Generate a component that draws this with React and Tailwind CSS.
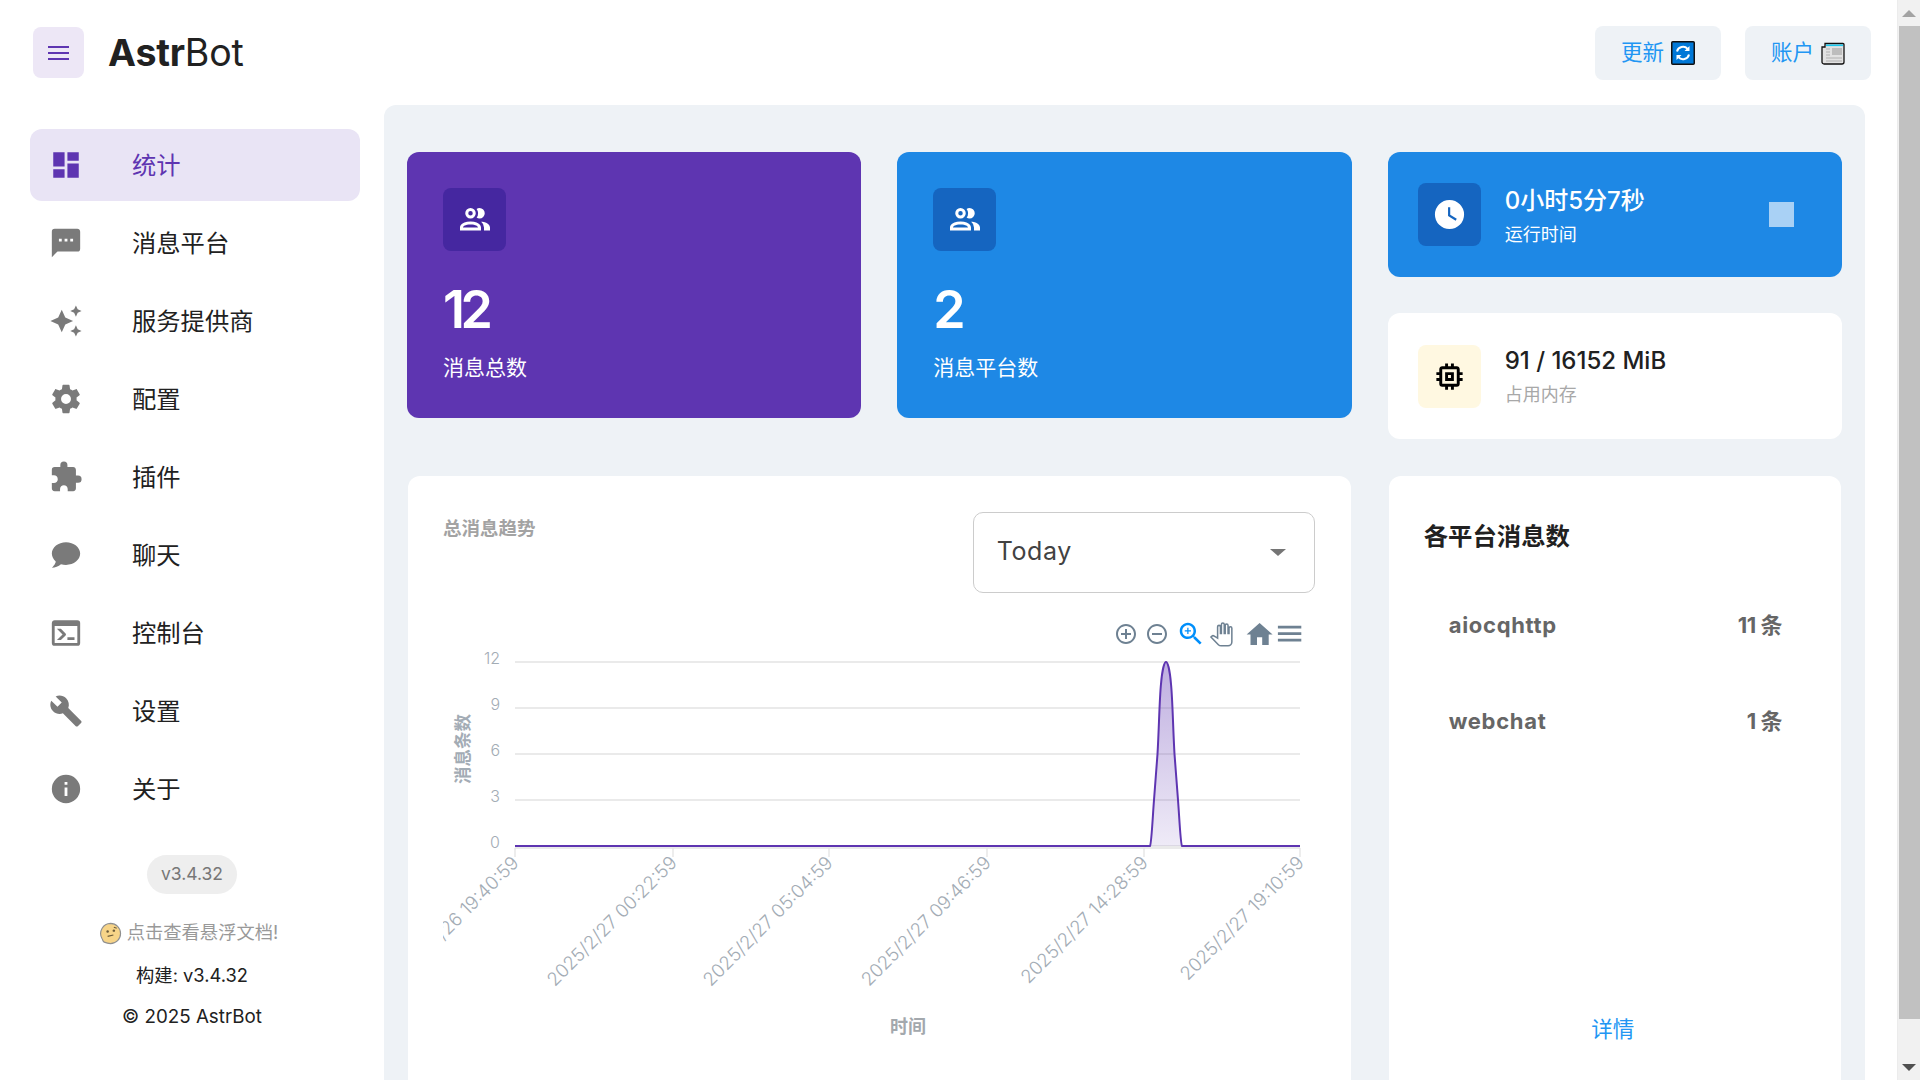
const mdi = {
  dashboard: "M13,3V9H21V3M13,21H21V11H13M3,21H11V15H3M3,13H11V3H3V13Z",
  message: "M20,2H4A2,2 0 0,0 2,4V22L6,18H20A2,2 0 0,0 22,16V4C22,2.89 21.1,2 20,2M17,11H15V9H17M13,11H11V9H13M9,11H7V9H9",
  creation: "M19,1L17.74,3.75L15,5L17.74,6.26L19,9L20.25,6.26L23,5L20.25,3.75M9,4L6.5,9.5L1,12L6.5,14.5L9,20L11.5,14.5L17,12L11.5,9.5M19,15L17.74,17.74L15,19L17.74,20.25L19,23L20.25,20.25L23,19L20.25,17.74",
  cog: "M12,15.5A3.5,3.5 0 0,1 8.5,12A3.5,3.5 0 0,1 12,8.5A3.5,3.5 0 0,1 15.5,12A3.5,3.5 0 0,1 12,15.5M19.43,12.97C19.47,12.65 19.5,12.33 19.5,12C19.5,11.67 19.47,11.34 19.43,11L21.54,9.37C21.73,9.22 21.78,8.95 21.66,8.73L19.66,5.27C19.54,5.05 19.27,4.96 19.05,5.05L16.56,6.05C16.04,5.66 15.5,5.32 14.87,5.07L14.5,2.42C14.46,2.18 14.25,2 14,2H10C9.75,2 9.54,2.18 9.5,2.42L9.13,5.07C8.5,5.32 7.96,5.66 7.44,6.05L4.95,5.05C4.73,4.96 4.46,5.05 4.34,5.27L2.34,8.73C2.21,8.95 2.27,9.22 2.46,9.37L4.57,11C4.53,11.34 4.5,11.67 4.5,12C4.5,12.33 4.53,12.65 4.57,12.97L2.46,14.63C2.27,14.78 2.21,15.05 2.34,15.27L4.34,18.73C4.46,18.95 4.73,19.03 4.95,18.95L7.44,17.94C7.96,18.34 8.5,18.68 9.13,18.93L9.5,21.58C9.54,21.82 9.75,22 10,22H14C14.25,22 14.46,21.82 14.5,21.58L14.87,18.93C15.5,18.67 16.04,18.34 16.56,17.94L19.05,18.95C19.27,19.03 19.54,18.95 19.66,18.73L21.66,15.27C21.78,15.05 21.73,14.78 21.54,14.63L19.43,12.97Z",
  puzzle: "M20.5,11H19V7C19,5.89 18.1,5 17,5H13V3.5A2.5,2.5 0 0,0 10.5,1A2.5,2.5 0 0,0 8,3.5V5H4A2,2 0 0,0 2,7V10.8H3.5C5,10.8 6.2,12 6.2,13.5C6.2,15 5,16.2 3.5,16.2H2V20A2,2 0 0,0 4,22H7.8V20.5C7.8,19 9,17.8 10.5,17.8C12,17.8 13.2,19 13.2,20.5V22H17A2,2 0 0,0 19,20V16H20.5A2.5,2.5 0 0,0 23,13.5A2.5,2.5 0 0,0 20.5,11Z",
  chat: "M12,3C6.5,3 2,6.58 2,11C2.05,13.15 3.06,15.17 4.75,16.5C4.75,17.1 4.33,18.67 2,21C4.37,20.89 6.64,20 8.47,18.5C9.61,18.83 10.81,19 12,19C17.5,19 22,15.42 22,11C22,6.58 17.5,3 12,3Z",
  console: "M20,19V7H4V19H20M20,3A2,2 0 0,1 22,5V19A2,2 0 0,1 20,21H4A2,2 0 0,1 2,19V5C2,3.89 2.9,3 4,3H20M13,17V15H18V17H13M9.58,13L5.57,9H8.4L11.7,12.3C12.09,12.69 12.09,13.33 11.7,13.72L8.42,17H5.59L9.58,13Z",
  wrench: "M22.7,19L13.6,9.9C14.5,7.6 14,4.9 12.1,3C10.1,1 7.1,0.6 4.7,1.7L9,6L6,9L1.6,4.7C0.4,7.1 0.9,10.1 2.9,12.1C4.8,14 7.5,14.5 9.8,13.6L18.9,22.7C19.3,23.1 19.9,23.1 20.3,22.7L22.6,20.4C23.1,20 23.1,19.3 22.7,19Z",
  info: "M13,9H11V7H13M13,17H11V11H13M12,2A10,10 0 0,0 2,12A10,10 0 0,0 12,22A10,10 0 0,0 22,12A10,10 0 0,0 12,2Z",
  users: "M13.07 10.41A5 5 0 0 0 13.07 4.59A3.39 3.39 0 0 1 15 4A3.5 3.5 0 0 1 15 11A3.39 3.39 0 0 1 13.07 10.41M5.5 7.5A3.5 3.5 0 1 1 9 11A3.5 3.5 0 0 1 5.5 7.5M7.5 7.5A1.5 1.5 0 1 0 9 6A1.5 1.5 0 0 0 7.5 7.5M16 17V19H2V17S2 13 9 13 16 17 16 17M14 17C13.86 16.22 12.67 15 9 15S4.07 16.22 4 17M15.95 13A5.32 5.32 0 0 1 18 17V19H22V17S22 13.37 15.94 13Z",
  clock: "M12,2A10,10 0 0,0 2,12A10,10 0 0,0 12,22A10,10 0 0,0 22,12A10,10 0 0,0 12,2M16.2,16.2L11,13V7H12.5V12.2L17,14.9L16.2,16.2Z",
  memory: "M17,17H7V7H17M21,11V9H19V7C19,5.89 18.1,5 17,5H15V3H13V5H11V3H9V5H7C5.89,5 5,5.89 5,7V9H3V11H5V13H3V15H5V17A2,2 0 0,0 7,19H9V21H11V19H13V21H15V19H17A2,2 0 0,0 19,17V15H21V13H19V11M13,13H11V11H13M15,9H9V15H15V9Z",
};

const Mdi = ({ name, className }) => (
  <svg viewBox="0 0 24 24" className={className} fill="currentColor">
    <path d={mdi[name]} />
  </svg>
);

const navItems = [
  { label: "统计", icon: "dashboard", active: true },
  { label: "消息平台", icon: "message" },
  { label: "服务提供商", icon: "creation" },
  { label: "配置", icon: "cog" },
  { label: "插件", icon: "puzzle" },
  { label: "聊天", icon: "chat" },
  { label: "控制台", icon: "console" },
  { label: "设置", icon: "wrench" },
  { label: "关于", icon: "info" },
];

const RefreshEmoji = () => (
  <svg viewBox="0 0 24 24" className="h-[24px] w-[24px]">
    <rect x="0.75" y="0.75" width="22.5" height="22.5" rx="1" fill="#0078d7" stroke="#111" strokeWidth="1.5" />
    <path d="M6 10.5a6.2 6.2 0 0 1 10.6-2.7M18 13.5a6.2 6.2 0 0 1-10.6 2.7" fill="none" stroke="#fff" strokeWidth="2" />
    <path d="M18.5 5v5h-5zM5.5 19v-5h5z" fill="#fff" />
  </svg>
);

const NewsEmoji = () => (
  <svg viewBox="0 0 24 24" className="h-[24px] w-[24px]">
    <path d="M4 2.5h18a1 1 0 0 1 1 1V21a2 2 0 0 1-2 2H3a2 2 0 0 1-2-2V6h3z" fill="#e2e2e2" stroke="#111" strokeWidth="1.3" />
    <rect x="5" y="3.5" width="17" height="1.6" fill="#19c8ee" />
    <rect x="11" y="7" width="10" height="7" fill="#bdbdbd" />
    <path d="M5 8h4M5 11h4M5 14h4M5 17h16M5 20h16" stroke="#b0b0b0" strokeWidth="1.2" />
  </svg>
);

const ThinkEmoji = () => (
  <svg viewBox="0 0 24 24" className="h-[23px] w-[23px] shrink-0">
    <path d="M12 1.5a10.5 10.5 0 0 1 0 21c-3 0-4.5-.6-6.5-1.5-1.5-.7-1.5-2.5-2.5-4a10.5 10.5 0 0 1 9-15.5z" fill="#f7d488" stroke="#8f8f8f" strokeWidth="1.2" />
    <circle cx="9" cy="10" r="1.3" fill="#6b5b3a" />
    <circle cx="15.5" cy="9" r="1.3" fill="#6b5b3a" />
    <path d="M15.5 5.5l3 1M9 15l6-1.5" stroke="#6b5b3a" strokeWidth="1.2" fill="none" />
  </svg>
);

const Sidebar = () => (
  <aside className="flex w-[384px] shrink-0 flex-col pt-[24px]">
    <nav className="flex flex-col gap-[6px] pl-[30px] pr-[24px]">
      {navItems.map((item) => (
        <a
          key={item.label}
          className={
            item.active
              ? "flex h-[72px] items-center rounded-xl bg-[#e9e4f5] pl-[19px] text-[#5e35b1]"
              : "flex h-[72px] items-center rounded-xl pl-[19px] text-[#212121]"
          }
        >
          <Mdi
            name={item.icon}
            className={
              item.active
                ? "h-[34px] w-[34px] shrink-0 text-[#5e35b1]"
                : "h-[34px] w-[34px] shrink-0 text-[#7a7a7a]"
            }
          />
          <span className="ml-[49px] text-[24.3px] leading-none">{item.label}</span>
        </a>
      ))}
    </nav>
    <div className="mt-[30px] flex flex-col items-center text-[18.3px]">
      <span className="flex h-[39px] w-[90px] items-center justify-center rounded-full bg-[#eeeeee] text-[17.5px] text-[#777777]">
        v3.4.32
      </span>
      <div className="mt-[28px] flex h-[22px] items-center gap-[5px] pr-[7px] text-[#999999]">
        <ThinkEmoji />
        <span>点击查看悬浮文档!</span>
      </div>
      <div className="mt-[20px] h-[22px] leading-[22px] text-[#212121]">构建: v3.4.32</div>
      <div className="mt-[20px] h-[22px] text-[18.8px] leading-[22px] text-[#212121]">© 2025 AstrBot</div>
    </div>
  </aside>
);

const StatCard = ({ value, label, bg, boxBg }) => (
  <div className={`h-[266px] rounded-xl px-[36px] pt-[36px] text-white ${bg}`}>
    <div className={`flex h-[63px] w-[63px] items-center justify-center rounded-lg ${boxBg}`}>
      <Mdi name="users" className="h-[36px] w-[36px]" />
    </div>
    <div className="mt-[24px] text-[52px] font-semibold leading-[70px] tracking-[-4.5px]">{value}</div>
    <div className="mt-[7px] text-[21px] leading-[32px]">{label}</div>
  </div>
);

const ticks = [72, 230, 386, 544, 701, 857];
const tickLabels = [
  "2025/2/26 19:40:59",
  "2025/2/27 00:22:59",
  "2025/2/27 05:04:59",
  "2025/2/27 09:46:59",
  "2025/2/27 14:28:59",
  "2025/2/27 19:10:59",
];
const gridLines = [
  { y: 52, label: "12" },
  { y: 98, label: "9" },
  { y: 144, label: "6" },
  { y: 190, label: "3" },
  { y: 236, label: "0" },
];

const peak =
  "M707,236 C708.5,234 709.8,205 711,190 C712,178 713.5,156 714.5,144 C716,118 716.5,88 718,74 C719,62 721,52 723,52 C725,52 727,62 728,74 C729.5,88 730,118 731.5,144 C732.5,156 734,178 735,190 C736.2,205 737.5,234 739,236";

const Chart = () => (
  <svg width="870" height="450" viewBox="0 0 870 450" className="mt-[17px] block overflow-hidden">
    <defs>
      <linearGradient id="peakFill" x1="0" x2="0" y1="52" y2="236" gradientUnits="userSpaceOnUse">
        <stop offset="0" stopColor="#5e35b1" stopOpacity="0.4" />
        <stop offset="1" stopColor="#5e35b1" stopOpacity="0.1" />
      </linearGradient>
    </defs>
    {gridLines.map((g) => (
      <g key={g.y}>
        <line x1="72" x2="857" y1={g.y} y2={g.y} stroke="#e3e3e3" strokeWidth="1.3" />
        <text x="57" y={g.y + 2} textAnchor="end" fontSize="16" fill="#a3acb5" fontFamily="Inter, sans-serif" fontWeight="300">
          {g.label}
        </text>
      </g>
    ))}
    <line x1="72" x2="857" y1="238" y2="238" stroke="#e3e3e3" strokeWidth="1.3" />
    {ticks.map((x, i) => (
      <g key={x}>
        <line x1={x} x2={x} y1="238" y2="247" stroke="#e3e3e3" strokeWidth="1.3" />
        <text
          x={x + 5}
          y="254"
          textAnchor="end"
          fontSize="18.5"
          fill="#a3acb5"
          fontFamily="Inter, sans-serif"
          fontWeight="300"
          transform={`rotate(-45 ${x + 5} 254)`}
        >
          {tickLabels[i]}
        </text>
      </g>
    ))}
    <path d={`${peak} Z`} fill="url(#peakFill)" />
    <path d={`M72,236 L707,236 ${peak.slice(peak.indexOf("C"))} L857,236`} fill="none" stroke="#5e35b1" strokeWidth="2" />
    <text
      x="26"
      y="139"
      textAnchor="middle"
      fontSize="17.5"
      fontWeight="700"
      fill="#a3acb5"
      fontFamily="'Noto Sans CJK SC', sans-serif"
      transform="rotate(-90 26 139)"
    >
      消息条数
    </text>
    <text x="465" y="423" textAnchor="middle" fontSize="18" fontWeight="700" fill="#a3a8ad" fontFamily="'Noto Sans CJK SC', sans-serif">
      时间
    </text>
    {/* chart toolbar */}
    <g fill="#6e8192" transform="translate(671,12) scale(1)">
      <path d="M13 7h-2v4H7v2h4v4h2v-4h4v-2h-4V7zm-1-5C6.48 2 2 6.48 2 12s4.48 10 10 10 10-4.48 10-10S17.52 2 12 2zm0 18c-4.41 0-8-3.59-8-8s3.59-8 8-8 8 3.59 8 8-3.59 8-8 8z" />
    </g>
    <g fill="#6e8192" transform="translate(702,12) scale(1)">
      <path d="M7 11v2h10v-2H7zm5-9C6.48 2 2 6.48 2 12s4.48 10 10 10 10-4.48 10-10S17.52 2 12 2zm0 18c-4.41 0-8-3.59-8-8s3.59-8 8-8 8 3.59 8 8-3.59 8-8 8z" />
    </g>
    <g fill="#008ffb" transform="translate(733,9) scale(1.25)">
      <path d="M15.5 14h-.79l-.28-.27C15.41 12.59 16 11.11 16 9.5 16 5.91 13.09 3 9.5 3S3 5.91 3 9.5 5.91 16 9.5 16c1.61 0 3.09-.59 4.23-1.57l.27.28v.79l5 4.99L20.49 19l-4.99-5zm-6 0C7.01 14 5 11.99 5 9.5S7.01 5 9.5 5 14 7.01 14 9.5 11.99 14 9.5 14z" />
      <path d="M12 10h-2v2H9v-2H7V9h2V7h1v2h2v1z" />
    </g>
    <g fill="#fff" stroke="#6e8192" strokeWidth="1.6" transform="translate(767,13) scale(0.95)">
      <path d="M23 5.5V20c0 2.2-1.8 4-4 4h-7.3c-1.08 0-2.1-.43-2.85-1.19L1 14.83s1.26-1.23 1.3-1.25c.22-.19.49-.29.79-.29.22 0 .42.06.6.16.04.01 4.31 2.46 4.31 2.46V4c0-.83.67-1.5 1.5-1.5S11 3.17 11 4v7h1V1.5c0-.83.67-1.5 1.5-1.5S15 .67 15 1.5V11h1V2.5c0-.83.67-1.5 1.5-1.5s1.5.67 1.5 1.5V11h1V5.5c0-.83.67-1.5 1.5-1.5s1.5.67 1.5 1.5z" />
    </g>
    <g fill="#6e8192" transform="translate(801,9) scale(1.3)">
      <path d="M10 20v-6h4v6h5v-8h3L12 3 2 12h3v8z" />
    </g>
    <g fill="#6e8192" transform="translate(831,8) scale(1.3)">
      <path d="M3 18h18v-2H3v2zm0-5h18v-2H3v2zm0-7v2h18V6H3z" />
    </g>
  </svg>
);

const InfoCard = ({ title, sub, icon, dark }) => (
  <div className={dark ? "flex h-[125px] items-center rounded-xl bg-[#1e88e5] pl-[30px] pr-[48px] text-white" : "flex h-[126px] items-center rounded-xl bg-white pl-[30px] pr-[48px] text-[#212121]"}>
    <div className={dark ? "flex h-[63px] w-[63px] shrink-0 items-center justify-center rounded-lg bg-[#1565c0]" : "flex h-[63px] w-[63px] shrink-0 items-center justify-center rounded-lg bg-[#fff8e1]"}>
      <Mdi name={icon} className={dark ? "h-[35px] w-[35px] text-white" : "h-[35px] w-[35px] text-black"} />
    </div>
    <div className={dark ? "ml-[24px] flex-1 pt-[2px]" : "ml-[24px] flex-1 pb-[2px]"}>
      <div className="text-[24px] font-medium leading-[36px]">{title}</div>
      <div className={dark ? "mt-[2px] text-[18px] leading-[27px] text-white" : "mt-[2px] text-[18px] leading-[27px] text-[#a8a8a8]"}>{sub}</div>
    </div>
    {dark && <div className="h-[25px] w-[25px] bg-[#a9d1f5]" />}
  </div>
);

const PlatformRow = ({ name, count, className }) => (
  <div className={`flex items-center justify-between pl-[25px] pr-[24px] text-[22px] font-bold leading-[32px] text-[#666666] ${className}`}>
    <span className="tracking-[0.7px]">{name}</span>
    <span className="tracking-[-0.5px]">{count}</span>
  </div>
);

const Scrollbar = () => (
  <div className="flex w-[23px] shrink-0 flex-col items-center border-l border-[#ececec] bg-[#f1f1f1]">
    <div className="flex h-[26px] w-full items-center justify-center">
      <div className="h-0 w-0 border-x-[7px] border-b-[7px] border-x-transparent border-b-[#a3a3a3]" />
    </div>
    <div className="h-[993px] w-[21px] bg-[#c1c1c1]" />
    <div className="flex-1" />
    <div className="flex h-[26px] w-full items-center justify-center">
      <div className="h-0 w-0 border-x-[7px] border-t-[7px] border-x-transparent border-t-[#505050]" />
    </div>
  </div>
);

export default function App() {
  return (
    <div className="flex h-screen w-screen overflow-hidden bg-white font-['Inter','Noto_Sans_CJK_SC',sans-serif] text-[#212121]">
      <div className="flex min-w-0 flex-1 flex-col">
        <header className="flex h-[105px] shrink-0 items-center pl-[33px] pr-[26px]">
          <button className="flex h-[51px] w-[51px] items-center justify-center rounded-lg bg-[#ede7f6]">
            <span className="flex w-[21px] flex-col gap-[4px]">
              <span className="h-[2px] bg-[#5e35b1]" />
              <span className="h-[2px] bg-[#5e35b1]" />
              <span className="h-[2px] bg-[#5e35b1]" />
            </span>
          </button>
          <div className="ml-[24px] text-[37.5px] leading-none tracking-[-0.2px] text-[#212121]">
            <span className="font-bold">Astr</span>
            <span className="font-normal">Bot</span>
          </div>
          <div className="ml-auto flex gap-[24px]">
            <button className="flex h-[54px] w-[126px] items-center justify-center gap-[7px] rounded-lg bg-[#eef2f6] text-[21.5px] text-[#2196f3]">
              更新
              <RefreshEmoji />
            </button>
            <button className="flex h-[54px] w-[126px] items-center justify-center gap-[7px] rounded-lg bg-[#eef2f6] text-[21.5px] text-[#2196f3]">
              账户
              <NewsEmoji />
            </button>
          </div>
        </header>
        <div className="flex min-h-0 flex-1">
          <Sidebar />
          <main className="mr-[32px] min-w-0 flex-1 rounded-t-xl bg-[#eef2f6] px-[23px] pt-[47px]">
            <div className="grid grid-cols-3 items-start gap-x-[36px] gap-y-[37px]">
              <StatCard value="12" label="消息总数" bg="bg-[#5e35b1]" boxBg="bg-[#4527a0]" />
              <StatCard value="2" label="消息平台数" bg="bg-[#1e88e5]" boxBg="bg-[#1565c0]" />
              <div className="flex flex-col gap-[36px]">
                <InfoCard dark icon="clock" title="0小时5分7秒" sub="运行时间" />
                <InfoCard icon="memory" title="91 / 16152 MiB" sub="占用内存" />
              </div>
              <div className="col-span-2 mx-[1px] h-[700px] rounded-xl bg-white pl-[35px] pr-[36px] pt-[36px]">
                <div className="flex items-start justify-between">
                  <div className="pt-[3px] text-[18.5px] font-bold leading-[27px] text-[#a3a3a3]">总消息趋势</div>
                  <div className="flex h-[81px] w-[342px] items-center justify-between rounded-[10px] border border-[#cccccc] pb-[1px] pl-[23px] pr-[28px]">
                    <span className="text-[25px] tracking-[0.6px] text-[#424242]">Today</span>
                    <span className="h-0 w-0 border-x-[8px] border-t-[7px] border-x-transparent border-t-[#757575]" />
                  </div>
                </div>
                <Chart />
              </div>
              <div className="mx-[1px] flex h-[700px] flex-col rounded-xl bg-white px-[35px] pt-[42px]">
                <div className="text-[24.4px] font-bold leading-[36px] text-[#212121]">各平台消息数</div>
                <PlatformRow name="aiocqhttp" count="11 条" className="mt-[55px]" />
                <PlatformRow name="webchat" count="1 条" className="mt-[64px]" />
                <div className="mt-[276px] pr-[4px] text-center text-[21.5px] leading-[32px] text-[#2196f3]">详情</div>
              </div>
            </div>
          </main>
        </div>
      </div>
      <Scrollbar />
    </div>
  );
}
